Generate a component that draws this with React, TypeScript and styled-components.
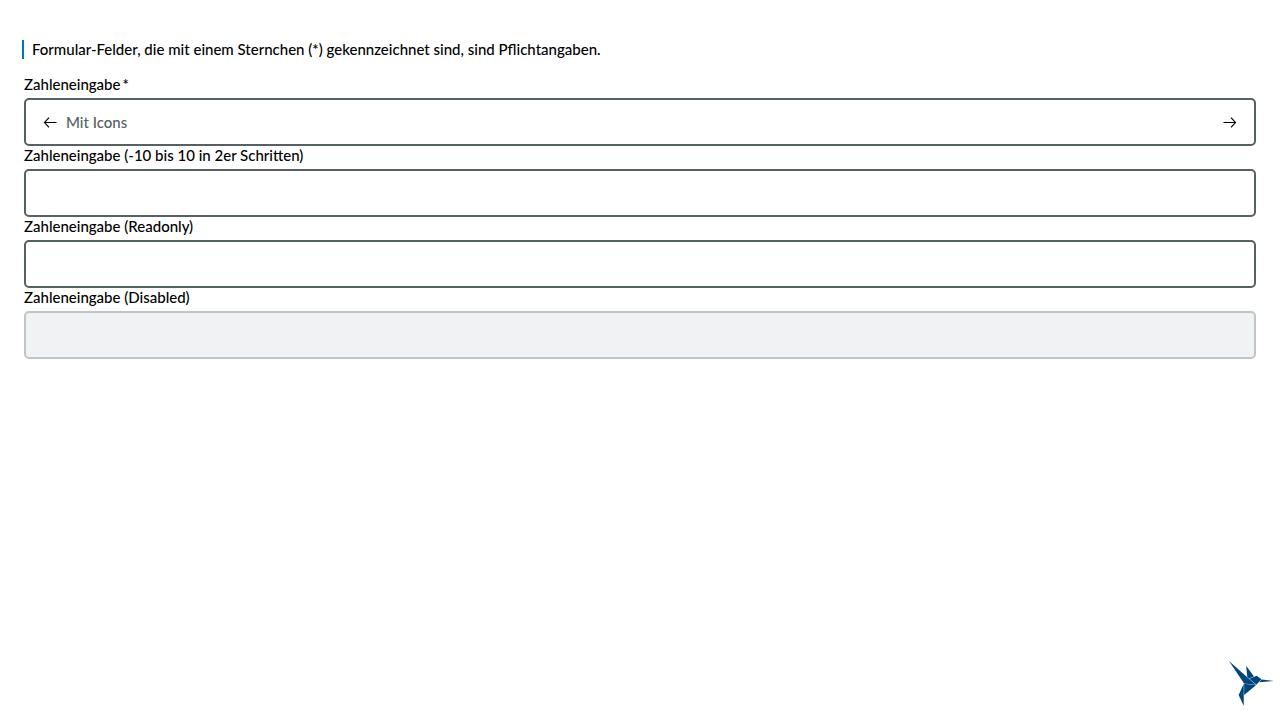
import React, { useId } from "react";
import styled, { createGlobalStyle } from "styled-components";

const GlobalStyle = createGlobalStyle`
  *, *::before, *::after { box-sizing: border-box; }
  body {
    margin: 0;
    background: #fff;
    color: #000;
    font-family: Lato, "Liberation Sans", sans-serif;
    font-size: 15px;
    font-weight: 500;
    line-height: 19px;
  }
`;

const Page = styled.main`
  padding: 40px 24px 24px;
`;

const Form = styled.form`
  display: flex;
  flex-direction: column;
`;

const Hint = styled.p`
  margin: 0 0 16px -2px;
  padding-left: 8px;
  border-left: 2px solid #0077b6;
`;

const Field = styled.div`
  display: flex;
  flex-direction: column;
  gap: 4px;
`;

const Label = styled.label`
  align-self: flex-start;
`;

const Required = styled.span`
  padding-left: 2px;
`;

const Control = styled.div<{ $disabled?: boolean }>`
  display: flex;
  align-items: center;
  gap: 8px;
  height: 48px;
  padding: 0 16px;
  border: 2px solid ${(p) => (p.$disabled ? "#bec5c9" : "#576164")};
  border-radius: 5px;
  background: ${(p) => (p.$disabled ? "#f0f2f4" : "#fff")};
`;

const NumberInput = styled.input`
  flex: 1;
  min-width: 0;
  height: 40px;
  padding: 0;
  border: 0;
  outline: 0;
  background: transparent;
  color: inherit;
  font: inherit;

  &::placeholder {
    color: #576164;
    opacity: 1;
  }
`;

const Icon = styled.svg`
  flex: none;
  width: 16px;
  height: 16px;
  fill: none;
  stroke: #000;
`;

const Logo = styled.svg`
  position: fixed;
  right: 3px;
  bottom: 11px;
  width: 51px;
  height: 51px;
  fill: #00457c;
`;

const ArrowLeft = () => (
  <Icon viewBox="0 0 16 16" aria-hidden="true">
    <path d="M7 3.6 2.4 8.5 7 13.4M2.5 8.5h12" strokeWidth="1.1" />
  </Icon>
);

const ArrowRight = () => (
  <Icon viewBox="0 0 16 16" aria-hidden="true">
    <path d="M9 3.6l4.6 4.9L9 13.4M13.5 8.5h-12" strokeWidth="1.1" />
  </Icon>
);

type NumberFieldProps = React.InputHTMLAttributes<HTMLInputElement> & {
  label: string;
  before?: React.ReactNode;
  after?: React.ReactNode;
};

function NumberField({ label, before, after, ...input }: NumberFieldProps) {
  const id = useId();
  return (
    <Field>
      <Label htmlFor={id}>
        {label}
        {input.required && <Required>*</Required>}
      </Label>
      <Control $disabled={input.disabled}>
        {before}
        <NumberInput id={id} type="number" {...input} />
        {after}
      </Control>
    </Field>
  );
}

export default function App() {
  return (
    <>
      <GlobalStyle />
      <Page>
        <Form>
          <Hint>
            Formular-Felder, die mit einem Sternchen (*) gekennzeichnet sind, sind Pflichtangaben.
          </Hint>
          <NumberField
            label="Zahleneingabe"
            placeholder="Mit Icons"
            required
            before={<ArrowLeft />}
            after={<ArrowRight />}
          />
          <NumberField label="Zahleneingabe (-10 bis 10 in 2er Schritten)" min={-10} max={10} step={2} />
          <NumberField label="Zahleneingabe (Readonly)" readOnly />
          <NumberField label="Zahleneingabe (Disabled)" disabled />
        </Form>
      </Page>
      <Logo viewBox="0 0 600 600" role="img" aria-label="KoliBri">
        <path d="M353 322L213 304V434L353 322Z" />
        <path d="M209 564V304L149 434L209 564Z" />
        <path d="M357 316L417 250L361 210L275 244L357 316Z" />
        <path d="M329 218L237 92L250 222L272 241L329 218Z" />
        <path d="M353 318L35 36L213 300L353 318Z" />
        <path d="M391 286L565 272L421 252L391 286Z" />
      </Logo>
    </>
  );
}
